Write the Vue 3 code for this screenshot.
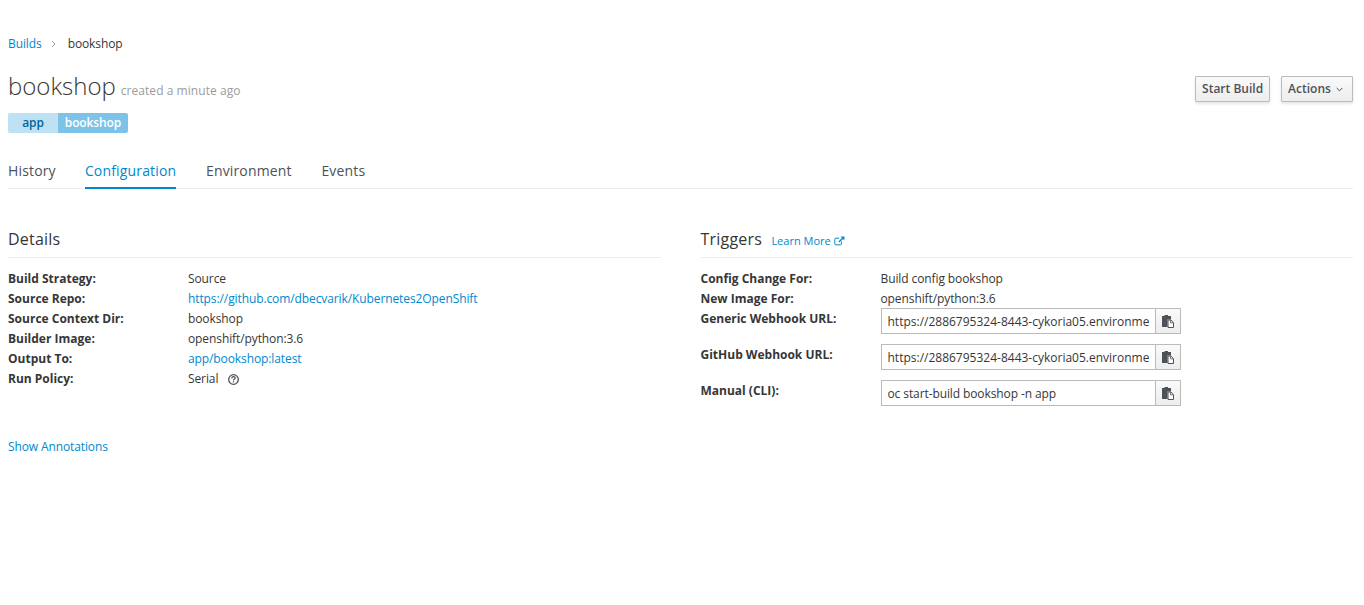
<script setup>
const details = [
  { k: 'Build Strategy:', v: 'Source' },
  { k: 'Source Repo:', v: 'https://github.com/dbecvarik/Kubernetes2OpenShift', link: true },
  { k: 'Source Context Dir:', v: 'bookshop' },
  { k: 'Builder Image:', v: 'openshift/python:3.6' },
  { k: 'Output To:', v: 'app/bookshop:latest', link: true },
  { k: 'Run Policy:', v: 'Serial', help: true }
]
const url = 'https://2886795324-8443-cykoria05.environments.katacoda.com:443/apis/build.openshift.io/v1/namespaces/app/buildconfigs/bookshop/webhooks'
const copies = [
  { k: 'Generic Webhook URL:', v: url },
  { k: 'GitHub Webhook URL:', v: url },
  { k: 'Manual (CLI):', v: 'oc start-build bookshop -n app', cli: true }
]
</script>

<template>
  <div class="page">
    <nav class="crumbs">
      <a class="link">Builds</a>
      <svg class="sep" width="5" height="8" viewBox="0 0 5 8"><path d="M1 1l3 3-3 3" fill="none" stroke="#9c9c9c" stroke-width="1"/></svg>
      <span class="cur">bookshop</span>
    </nav>

    <header class="head">
      <div class="titleline">
        <h1>bookshop</h1>
        <small>created a minute ago</small>
      </div>
      <div class="actions">
        <button class="btn">Start Build</button>
        <button class="btn wide">Actions
          <svg width="7" height="5" viewBox="0 0 7 5"><path d="M.7 1l2.8 2.8L6.3 1" fill="none" stroke="#4d5258" stroke-width="1"/></svg>
        </button>
      </div>
    </header>

    <div class="labels">
      <span class="lk">app</span><span class="lv">bookshop</span>
    </div>

    <ul class="tabs">
      <li>History</li>
      <li class="active">Configuration</li>
      <li>Environment</li>
      <li>Events</li>
    </ul>

    <div class="cols">
      <section>
        <h3>Details</h3>
        <div class="rows">
          <div class="row" v-for="d in details" :key="d.k">
            <div class="k">{{ d.k }}</div>
            <div class="v">
              <a v-if="d.link" class="link">{{ d.v }}</a>
              <template v-else>{{ d.v }}</template>
              <svg v-if="d.help" class="help" width="11" height="11" viewBox="0 0 11 11">
                <circle cx="5.5" cy="5.5" r="4.8" fill="none" stroke="#4d5258" stroke-width="1.3"/>
                <path d="M3.8 4.4c0-1.1.7-1.7 1.7-1.7s1.7.6 1.7 1.4c0 1.2-1.7 1.2-1.7 2.3" fill="none" stroke="#4d5258" stroke-width="1.2"/>
                <rect x="4.9" y="7.2" width="1.2" height="1.3" fill="#4d5258"/>
              </svg>
            </div>
          </div>
        </div>
        <a class="link annot">Show Annotations</a>
      </section>

      <section>
        <h3>Triggers <a class="link more">Learn More
          <svg width="11" height="10" viewBox="0 0 11 10"><path d="M7.5 5.6v2.2c0 .6-.4 1-1 1H1.8c-.6 0-1-.4-1-1V3.2c0-.6.4-1 1-1h3.4" fill="none" stroke="#0088ce" stroke-width="1"/><path d="M6.6.6h3.8v3.8L9 3 5.4 6.6 4.4 5.6 8 2z" fill="#0088ce"/></svg>
        </a></h3>
        <div class="rows">
          <div class="row"><div class="k">Config Change For:</div><div class="v">Build config bookshop</div></div>
          <div class="row"><div class="k">New Image For:</div><div class="v">openshift/python:3.6</div></div>
          <div class="row copyrow" v-for="c in copies" :key="c.k">
            <div class="k">{{ c.k }}</div>
            <div class="group">
              <input class="field" :class="{ cli: c.cli }" readonly :value="c.v" />
              <span class="copy">
                <svg width="12" height="13" viewBox="0 0 12 13">
                  <path d="M0 1h2.5V0h3.5v1h3v3.5H5.5V12H0z" fill="#4d5258"/>
                  <path d="M6 5h2.8L11.5 7.7V12.5H6z" fill="#fff" stroke="#4d5258" stroke-width="1"/>
                  <path d="M8.6 5v2.9h2.9" fill="none" stroke="#4d5258" stroke-width=".8"/>
                </svg>
              </span>
            </div>
          </div>
        </div>
      </section>
    </div>
  </div>
</template>

<style scoped>
.page {
  padding: 34px 11px 0 8px;
  font-family: "Open Sans", "Noto Sans", sans-serif;
  font-size: 12px;
  line-height: 20px;
  color: #363636;
}
.link { color: #0088ce; text-decoration: none; }
.crumbs { display: flex; align-items: center; height: 20px; letter-spacing: -.1px; }
.sep { margin: 0 12px 0 9px; }
.cur { color: #363636; }
.head { display: flex; justify-content: space-between; align-items: flex-start; margin-top: 13px; height: 38px; }
.titleline { display: flex; align-items: baseline; }
h1 { margin: 0; font-size: 24px; font-weight: 300; line-height: 38px; color: #363636; }
small { font-size: 12px; color: #9c9c9c; margin-left: 5px; letter-spacing: .05px; }
.actions { display: flex; gap: 11px; margin-top: 9px; }
.btn {
  height: 26px;
  padding: 0 6px;
  border: 1px solid #bbb;
  border-radius: 1px;
  background: linear-gradient(#fafafa, #ededed);
  box-shadow: 0 2px 3px rgba(3, 3, 3, .1);
  color: #4d5258;
  font: 600 12px/24px "Open Sans", sans-serif;
}
.btn svg { margin-left: 2px; vertical-align: 1px; }
.btn.wide svg { margin: 0 1px 0 2px; }
.btn.wide { padding: 0 8px 0 6px; }
.labels { display: flex; height: 20px; margin-top: 8px; font-weight: 600; line-height: 20px; text-align: center; letter-spacing: -.1px; }
.lk { width: 50px; background: #bee1f4; color: #00659c; border-radius: 2px 0 0 2px; }
.lv { width: 70px; background: #7dc3e8; color: #fff; border-radius: 0 2px 2px 0; }
.tabs {
  display: flex;
  gap: 29.7px;
  list-style: none;
  margin: 21px 0 0;
  padding: 0;
  height: 34px;
  border-bottom: 1px solid #ededed;
  font-size: 14px;
  line-height: 34px;
  letter-spacing: .16px;
  color: #4d5258;
}
.tabs li { height: 35px; box-sizing: border-box; }
.tabs li:first-child { margin-right: -.6px; }
.tabs .active { color: #0088ce; border-bottom: 2px solid #0088ce; }
.cols { display: grid; grid-template-columns: 1fr 1fr; gap: 40px; margin-top: 28px; }
h3 {
  margin: 0;
  height: 41px;
  box-sizing: border-box;
  border-bottom: 1px solid #ededed;
  font-size: 16px;
  font-weight: 400;
  line-height: 45px;
  letter-spacing: .2px;
  color: #363636;
}
.more { font-size: 11px; margin-left: 5px; letter-spacing: 0; }
.more svg { vertical-align: -1px; }
.rows { margin-top: 11px; }
.row { display: flex; min-height: 20px; }
.k { width: 180px; flex: none; font-weight: 700; }
.v { display: flex; align-items: center; letter-spacing: -.1px; }
.help { margin-left: 10px; }
.copyrow { height: 36px; }
.group { display: flex; width: 300px; height: 26px; margin-top: -1px; }
.field {
  flex: 1;
  min-width: 0;
  box-sizing: border-box;
  height: 26px;
  padding: 0 6px;
  border: 1px solid #bbb;
  border-right: 0;
  outline: 0;
  color: #363636;
  background: #fff;
  font: 12px "Open Sans", sans-serif;
}
.field.cli { letter-spacing: -.1px; }
.copy {
  width: 26px;
  box-sizing: border-box;
  border: 1px solid #bbb;
  background: linear-gradient(#fafafa, #ededed);
  display: flex;
  align-items: center;
  justify-content: center;
}
.annot { display: block; margin-top: 48px; letter-spacing: -.12px; }
</style>
